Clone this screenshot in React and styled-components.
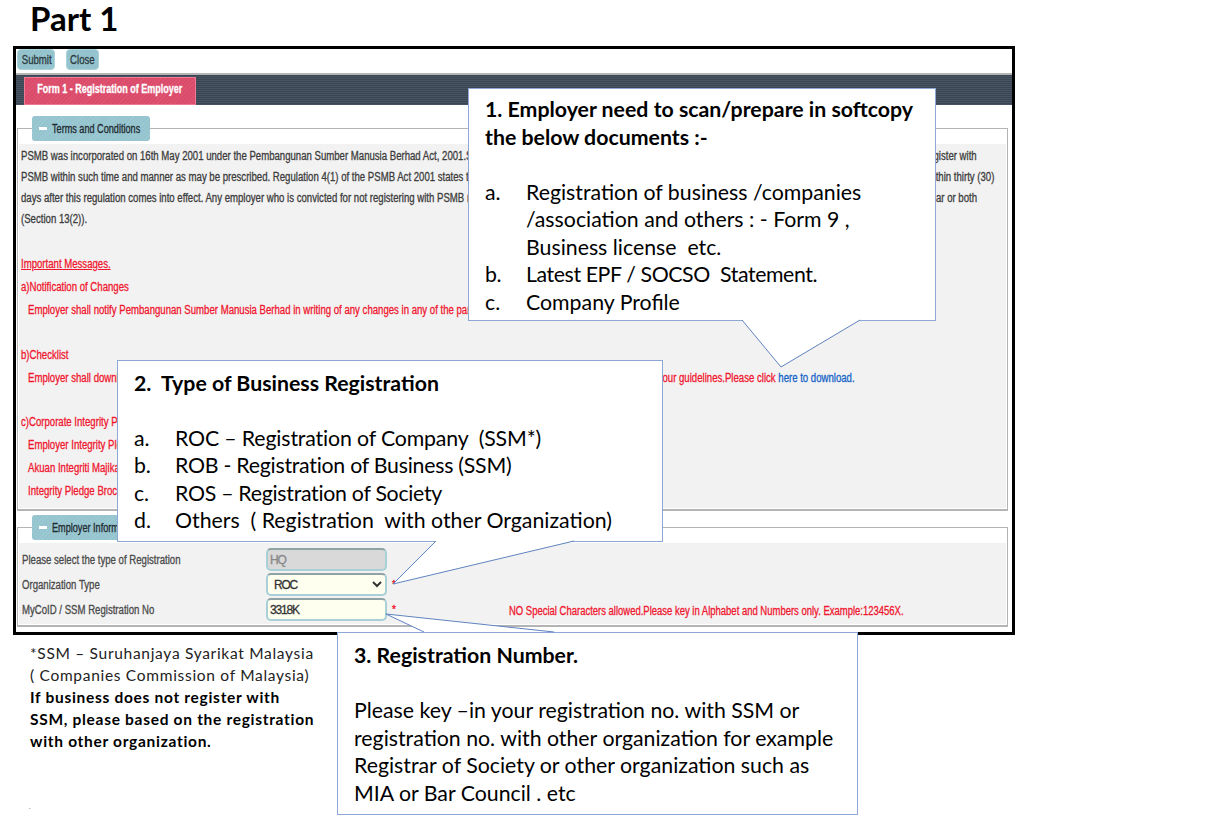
import styled, { createGlobalStyle } from 'styled-components'

const GlobalStyle = createGlobalStyle`
  html, body {
    margin: 0;
    background: #fff;
  }
`

const narrow = `"Liberation Sans", Arial, sans-serif`
const slide = `Lato, "Open Sans", sans-serif`

const stripes = `repeating-linear-gradient(135deg, rgba(255,255,255,.04) 0 1px, rgba(0,0,0,.02) 1px 3px)`
const barLines = `repeating-linear-gradient(0deg, rgba(255,255,255,.05) 0 1px, rgba(0,0,0,.05) 1px 2px)`

const Page = styled.div`
  position: relative;
  width: 1229px;
  height: 823px;
  overflow: hidden;
  background: #fff;
`
const PageTitle = styled.h1`
  margin: 0;
  height: 46px;
  padding-left: 30px;
  box-sizing: border-box;
  font: 700 33px/36px ${slide};
  color: #000;
`
const Frame = styled.div`
  margin-left: 13px;
  width: 1002px;
  height: 589px;
  box-sizing: border-box;
  border: 3px solid #000;
  overflow: hidden;
  background: #fff;
  font-family: ${narrow};
  font-size: 12px;
  color: #3c3c3c;
  -webkit-text-stroke: 0.3px;
`
// the old form was captured in a condensed face, none is installed so the text is squeezed
const Squeeze = styled.span`
  display: inline-block;
  flex: none;
  white-space: nowrap;
  transform: scaleX(${p => p.$scale || 0.8});
  transform-origin: ${p => p.$from || 'left'} center;
`
const Toolbar = styled.div`
  display: flex;
  gap: 11px;
  height: 24px;
  padding-left: 1px;
  box-sizing: border-box;
`
const ToolButton = styled.button`
  height: 21px;
  width: ${p => p.$width}px;
  padding: 0;
  overflow: hidden;
  border: 1px solid #a9d4dc;
  border-radius: 4px;
  background: ${stripes}, #95c5cf;
  font: 12px ${narrow};
  color: #2c3a40;
`
const TabBar = styled.div`
  display: flex;
  align-items: flex-end;
  height: 30px;
  padding-left: 8px;
  border-top: 2px solid #b5b5b5;
  background: ${barLines}, #3e4a59;
`
const Tab = styled.div`
  display: flex;
  align-items: center;
  justify-content: center;
  width: 172px;
  height: 28px;
  box-sizing: border-box;
  padding-bottom: 4px;
  border: 1px solid #f07a95;
  background: ${stripes}, #df4d6d;
  color: #fff;
  font: 700 12px ${narrow};
`
const FormBody = styled.div`
  padding: 0 4px 0 1px;
`
const Group = styled.fieldset`
  margin: ${p => p.$gap}px 0 0;
  padding: 3px 1px 1px;
  border: 1px solid #b4b4b4;
  border-bottom-width: 2px;
  min-width: 0;
`
const Legend = styled.legend`
  display: flex;
  align-items: center;
  gap: 5px;
  box-sizing: border-box;
  width: ${p => p.$width}px;
  height: 25px;
  margin-left: 13px;
  padding: 0 0 0 7px;
  border-radius: 3px;
  overflow: hidden;
  background: ${stripes}, #98c8d2;
  font: 12px ${narrow};
  color: #1f2a30;
`
const Dash = styled.span`
  flex: none;
  width: 8px;
  height: 3px;
  background: #fff;
`
const TermsPanel = styled.div`
  height: 364px;
  box-sizing: border-box;
  padding: 2px 2px 0;
  background: #f2f2f2;
`
const Line = styled.div`
  display: flex;
  justify-content: space-between;
  height: 21px;
  line-height: 21px;
  padding-right: ${p => p.$right || 0}px;
`
const Gap = styled.div`
  height: ${p => p.$h}px;
`
const Message = styled.div`
  height: 23px;
  line-height: 23px;
  color: #f0162e;
  padding-left: ${p => (p.$indent ? 7 : 0)}px;
`
const Underlined = styled.span`
  text-decoration: underline;
`
const DownloadLink = styled.a`
  color: #1464c8;
`
const InfoPanel = styled.div`
  height: 81px;
  box-sizing: border-box;
  padding: 5px 0 0 3px;
  background: #f2f2f2;
  display: grid;
  grid-template-columns: 244px 121px 122px 1fr;
  grid-auto-rows: 23px;
  row-gap: 2px;
  align-items: center;
`
const FieldLabel = styled.label`
  color: #4a4a4a;
`
const inputLook = `
  width: 121px;
  height: 23px;
  box-sizing: border-box;
  border: 2px solid #a8d0d6;
  border-top-color: #8fa3a5;
  border-radius: 5px;
  font: 12px ${narrow};
  letter-spacing: -1.2px;
  outline: 0;
`
const TextField = styled.input`
  ${inputLook}
  padding: 0 2px;
  background: ${p => (p.disabled ? '#d9d9d9' : '#fffff0')};
  color: ${p => (p.disabled ? '#888' : '#333')};
`
const SelectField = styled.select`
  ${inputLook}
  padding: 0 2px;
  background: #fffff0;
  color: #333;
`
const Required = styled.span`
  padding-left: 5px;
  color: #f0162e;
  font-size: 10px;
`
const Hint = styled.span`
  color: #f0162e;
  padding-top: 2px;
  white-space: nowrap;
`
const Footnote = styled.div`
  margin: 7px 0 0 30px;
  width: 300px;
  font: 15.5px/22px ${slide};
  letter-spacing: .7px;
  white-space: nowrap;
  color: #222;
`
const FootBold = styled.div`
  font-weight: 700;
  color: #000;
`
const Speck = styled.div`
  margin: 51px 0 0 -1px;
  font-size: 6px;
  line-height: 8px;
`
const Callout = styled.div`
  position: absolute;
  left: ${p => p.$left}px;
  top: ${p => p.$top}px;
  width: ${p => p.$width}px;
  height: ${p => p.$height}px;
  box-sizing: border-box;
  padding: ${p => p.$pad}px 16px 0;
  border: 1.5px solid #8ea8d6;
  background: #fff;
  color: #000;
  font: 21.3px/27.5px ${slide};
  white-space: pre;
`
const Tail = styled.svg`
  position: absolute;
  left: ${p => p.$x}px;
  top: ${p => p.$y}px;
  overflow: visible;
`
const CalloutTitle = styled.div`
  font-weight: 700;
`
const Spacer = styled.div`
  height: 27.5px;
`
const ListRow = styled.div`
  display: grid;
  grid-template-columns: 41px 1fr;
  letter-spacing: ${p => p.$track || 0}px;
`

const terms = [
  ['PSMB was incorporated on 16th May 2001 under the Pembangunan Sumber Manusia Berhad Act, 2001.Section 13(1) states that every employer shall', 'register with', 27],
  ['PSMB within such time and manner as may be prescribed. Regulation 4(1) of the PSMB Act 2001 states that employers shall register within', 'thin thirty (30)', 10],
  ['days after this regulation comes into effect. Any employer who is convicted for not registering with PSMB may be fined or jailed for a', 'year or both', 27],
]

function TailShape({ x, y, w, h, points }) {
  // first and last point sit on the box edge, white fill hides the border between them
  return (
    <Tail $x={x} $y={y} width={w} height={h}>
      <polygon points={points} fill="#fff" />
      <polyline points={points} fill="none" stroke="#5f83c0" strokeWidth="1" />
    </Tail>
  )
}

function App() {
  return (
    <Page>
      <GlobalStyle />
      <PageTitle>Part 1</PageTitle>
      <Frame>
        <Toolbar>
          <ToolButton $width={38}><Squeeze $from="center">Submit</Squeeze></ToolButton>
          <ToolButton $width={33}><Squeeze $from="center">Close</Squeeze></ToolButton>
        </Toolbar>
        <TabBar>
          <Tab><Squeeze $from="center" $scale={0.75}>Form 1 - Registration of Employer</Squeeze></Tab>
        </TabBar>
        <FormBody>
          <Group $gap={11}>
            <Legend $width={118}><Dash /><Squeeze $scale={0.76}>Terms and Conditions</Squeeze></Legend>
            <TermsPanel>
              {terms.map(([left, right, pad]) => (
                <Line key={left} $right={pad}>
                  <Squeeze>{left}</Squeeze>
                  <Squeeze $from="right">{right}</Squeeze>
                </Line>
              ))}
              <Line><Squeeze>(Section 13(2)).</Squeeze></Line>
              <Gap $h={23} />
              <Message><Squeeze><Underlined>Important Messages.</Underlined></Squeeze></Message>
              <Message><Squeeze>a)Notification of Changes</Squeeze></Message>
              <Message $indent><Squeeze>Employer shall notify Pembangunan Sumber Manusia Berhad in writing of any changes in any of the particulars</Squeeze></Message>
              <Gap $h={22} />
              <Message><Squeeze>b)Checklist</Squeeze></Message>
              <Message $indent>
                <Squeeze>
                  Employer shall download the checklist and prepare the supporting documents as stated in the checklist together with the application forms and follow our guidelines.Please click <DownloadLink>here to download.</DownloadLink>
                </Squeeze>
              </Message>
              <Gap $h={21} />
              <Message><Squeeze>c)Corporate Integrity Pledge</Squeeze></Message>
              <Message $indent><Squeeze>Employer Integrity Pledge</Squeeze></Message>
              <Message $indent><Squeeze>Akuan Integriti Majikan</Squeeze></Message>
              <Message $indent><Squeeze>Integrity Pledge Brochure</Squeeze></Message>
            </TermsPanel>
          </Group>
          <Group $gap={4}>
            <Legend $width={150}><Dash /><Squeeze $scale={0.76}>Employer Information</Squeeze></Legend>
            <InfoPanel>
              <FieldLabel><Squeeze>Please select the type of Registration</Squeeze></FieldLabel>
              <TextField disabled value="HQ" readOnly />
              <span />
              <span />
              <FieldLabel><Squeeze>Organization Type</Squeeze></FieldLabel>
              <SelectField defaultValue="ROC">
                <option>ROC</option>
                <option>ROB</option>
                <option>ROS</option>
              </SelectField>
              <Required>*</Required>
              <span />
              <FieldLabel><Squeeze>MyCoID / SSM Registration No</Squeeze></FieldLabel>
              <TextField value="3318K" readOnly />
              <Required>*</Required>
              <Hint><Squeeze $scale={0.79}>NO Special Characters allowed.Please key in Alphabet and Numbers only. Example:123456X.</Squeeze></Hint>
            </InfoPanel>
          </Group>
          <Group $gap={5}>
            <Legend $width={150}><Dash /></Legend>
          </Group>
        </FormBody>
      </Frame>
      <Footnote>
        <div>*SSM – Suruhanjaya Syarikat Malaysia</div>
        <div>( Companies Commission of Malaysia)</div>
        <FootBold>If business does not register with</FootBold>
        <FootBold>SSM, please based on the registration</FootBold>
        <FootBold>with other organization.</FootBold>
        <Speck>.</Speck>
      </Footnote>

      <Callout $left={468} $top={88} $width={468} $height={233} $pad={7}>
        <CalloutTitle>1. Employer need to scan/prepare in softcopy</CalloutTitle>
        <CalloutTitle>the below documents :-</CalloutTitle>
        <Spacer />
        <ListRow><span>a.</span><span>Registration of business /companies</span></ListRow>
        <ListRow><span /><span>/association and others : - Form 9 ,</span></ListRow>
        <ListRow><span /><span>Business license  etc.</span></ListRow>
        <ListRow $track={-0.4}><span>b.</span><span>Latest EPF / SOCSO  Statement.</span></ListRow>
        <ListRow><span>c.</span><span>Company Profile</span></ListRow>
        <TailShape x={273} y={231} w={120} h={50} points="0,0 39,47 118,0" />
      </Callout>

      <Callout $left={117} $top={360} $width={546} $height={182} $pad={8.5}>
        <CalloutTitle>2.  Type of Business Registration</CalloutTitle>
        <Spacer />
        <ListRow $track={-0.15}><span>a.</span><span>ROC – Registration of Company  (SSM*)</span></ListRow>
        <ListRow $track={-0.25}><span>b.</span><span>ROB - Registration of Business (SSM)</span></ListRow>
        <ListRow $track={-0.28}><span>c.</span><span>ROS – Registration of Society</span></ListRow>
        <ListRow><span>d.</span><span>Others  ( Registration  with other Organization)</span></ListRow>
        <TailShape x={275} y={180} w={182} h={44} points="43,0 0,43 181,0" />
      </Callout>

      <Callout $left={337} $top={632} $width={521} $height={183} $pad={9}>
        <CalloutTitle>3. Registration Number.</CalloutTitle>
        <Spacer />
        <div>Please key –in your registration no. with SSM or</div>
        <div>registration no. with other organization for example</div>
        <div>Registrar of Society or other organization such as</div>
        <div>MIA or Bar Council . etc</div>
        <TailShape x={48} y={-19} w={170} h={19} points="38,18 0,0 168,18" />
      </Callout>
    </Page>
  )
}

export default App
